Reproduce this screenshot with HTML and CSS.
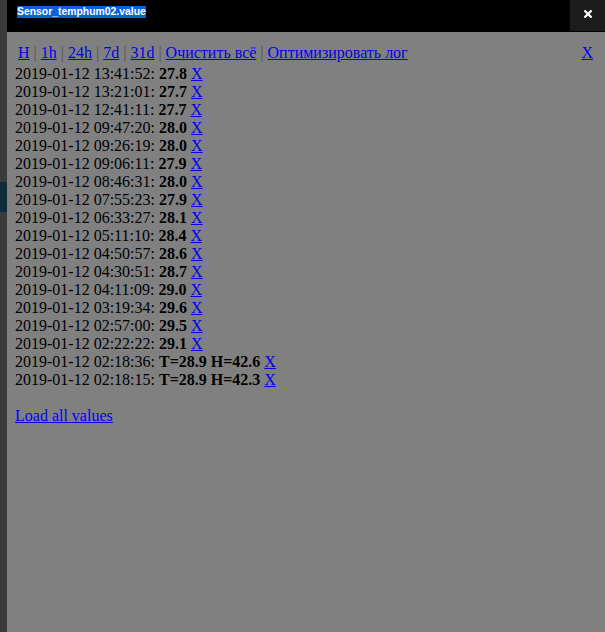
FILE: index.html
```html
<!DOCTYPE html>
<html>
<head>
<meta charset="utf-8">
<link rel="stylesheet" href="styles.css">
</head>
<body>
<div class="page">
  <div class="strip"><div class="strip-mark"></div></div>
  <div class="dialog">
    <div class="titlebar">
      <span class="title">Sensor_temphum02.value</span>
      <div class="close">
        <svg width="8" height="8" viewBox="0 0 8 8"><path d="M1.2 1.2 L6.8 6.8 M6.8 1.2 L1.2 6.8" stroke="#fff" stroke-width="2.2" stroke-linecap="square"/></svg>
      </div>
    </div>
    <div class="content">
      <div class="nav">
        <a class="closex" href="#">X</a>
        <a href="#">H</a> <span class="sep">|</span> <a href="#">1h</a> <span class="sep">|</span> <a href="#">24h</a> <span class="sep">|</span> <a href="#">7d</a> <span class="sep">|</span> <a href="#">31d</a> <span class="sep">|</span> <a href="#">Очистить всё</a> <span class="sep">|</span> <a href="#">Оптимизировать лог</a>
      </div>
      <div class="rows">
        <div class="row">2019-01-12 13:41:52: <b>27.8</b> <a href="#">X</a></div>
        <div class="row">2019-01-12 13:21:01: <b>27.7</b> <a href="#">X</a></div>
        <div class="row">2019-01-12 12:41:11: <b>27.7</b> <a href="#">X</a></div>
        <div class="row">2019-01-12 09:47:20: <b>28.0</b> <a href="#">X</a></div>
        <div class="row">2019-01-12 09:26:19: <b>28.0</b> <a href="#">X</a></div>
        <div class="row">2019-01-12 09:06:11: <b>27.9</b> <a href="#">X</a></div>
        <div class="row">2019-01-12 08:46:31: <b>28.0</b> <a href="#">X</a></div>
        <div class="row">2019-01-12 07:55:23: <b>27.9</b> <a href="#">X</a></div>
        <div class="row">2019-01-12 06:33:27: <b>28.1</b> <a href="#">X</a></div>
        <div class="row">2019-01-12 05:11:10: <b>28.4</b> <a href="#">X</a></div>
        <div class="row">2019-01-12 04:50:57: <b>28.6</b> <a href="#">X</a></div>
        <div class="row">2019-01-12 04:30:51: <b>28.7</b> <a href="#">X</a></div>
        <div class="row">2019-01-12 04:11:09: <b>29.0</b> <a href="#">X</a></div>
        <div class="row">2019-01-12 03:19:34: <b>29.6</b> <a href="#">X</a></div>
        <div class="row">2019-01-12 02:57:00: <b>29.5</b> <a href="#">X</a></div>
        <div class="row">2019-01-12 02:22:22: <b>29.1</b> <a href="#">X</a></div>
        <div class="row">2019-01-12 02:18:36: <b>T=28.9 H=42.6</b> <a href="#">X</a></div>
        <div class="row">2019-01-12 02:18:15: <b>T=28.9 H=42.3</b> <a href="#">X</a></div>
      </div>
      <div class="load"><a href="#">Load all values</a></div>
    </div>
  </div>
</div>
</body>
</html>
```

FILE: styles.css
```css
html, body {
  margin: 0;
  padding: 0;
  height: 100%;
  background: #3c3c3c;
}
.page {
  display: flex;
  height: 632px;
  overflow: hidden;
}
.strip {
  width: 7px;
  flex: none;
  background: #3b3b3b;
}
.strip-mark {
  margin-top: 182px;
  height: 30px;
  background: #0d2b3b;
}
.dialog {
  flex: 1;
  display: flex;
  flex-direction: column;
  background: #808080;
}
.titlebar {
  height: 32px;
  flex: none;
  background: #000;
  display: flex;
  align-items: flex-start;
  justify-content: space-between;
}
.title {
  margin: 6px 0 0 10px;
  font-family: "Liberation Sans", Arial, sans-serif;
  font-weight: bold;
  font-size: 10.4px;
  line-height: 12px;
  color: #fff;
  background: #0b62d6;
}
.close {
  width: 35px;
  height: 31px;
  background: #1c1c1c;
  display: flex;
  align-items: center;
  justify-content: center;
  padding-bottom: 4px;
  box-sizing: border-box;
}
.content {
  padding: 12px 12px 0 8px;
  font-family: "Liberation Serif", "Times New Roman", serif;
  font-size: 16px;
  line-height: 18px;
  color: #000;
}
.content a {
  color: #0000ee;
  text-decoration: underline;
}
.nav {
  padding-left: 3px;
  margin-bottom: 3px;
}
.sep {
  color: #555;
}
.closex {
  float: right;
}
.row {
  height: 18px;
  white-space: nowrap;
}
.load {
  margin-top: 18px;
}
```
